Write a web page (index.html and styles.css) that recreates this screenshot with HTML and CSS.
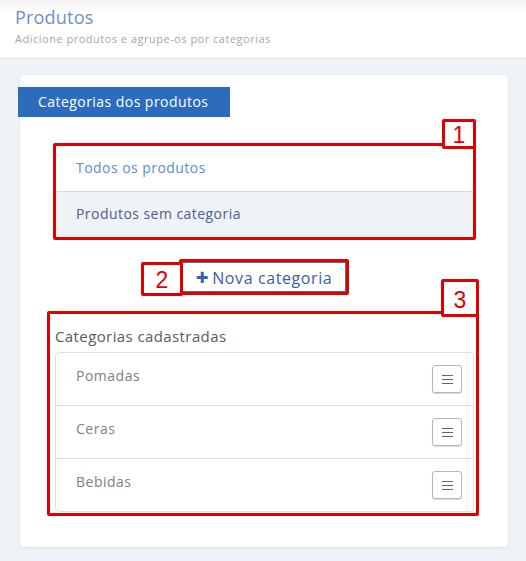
FILE: index.html
```html
<!DOCTYPE html>
<html lang="pt-BR">
<head>
  <meta charset="UTF-8" />
  <title>Produtos</title>
  <link rel="stylesheet" href="styles.css">
</head>
<body>
  <header class="page-header">
    <h1 class="page-title">Produtos</h1>
    <p class="page-subtitle">Adicione produtos e agrupe-os por categorias</p>
  </header>

  <main class="content">
    <section class="card">
      <div class="card-tab">Categorias dos produtos</div>

      <!-- 1: filtros fixos -->
      <div class="mark mark-filters">
        <span class="mark-num mark-num-top">1</span>
        <ul class="filter-list">
          <li class="filter-item">Todos os produtos</li>
          <li class="filter-item active">Produtos sem categoria</li>
        </ul>
      </div>

      <!-- 2: nova categoria -->
      <div class="new-row">
        <div class="mark mark-button">
          <span class="mark-num mark-num-left">2</span>
          <button class="btn-new"><span class="plus">+</span>Nova categoria</button>
        </div>
      </div>

      <!-- 3: categorias cadastradas -->
      <div class="mark mark-categories">
        <span class="mark-num mark-num-top tall">3</span>
        <h2 class="section-title">Categorias cadastradas</h2>
        <ul class="category-list">
          <li class="category-item">
            <span>Pomadas</span>
            <button class="btn-menu" aria-label="menu"><span></span><span></span><span></span></button>
          </li>
          <li class="category-item">
            <span>Ceras</span>
            <button class="btn-menu" aria-label="menu"><span></span><span></span><span></span></button>
          </li>
          <li class="category-item">
            <span>Bebidas</span>
            <button class="btn-menu" aria-label="menu"><span></span><span></span><span></span></button>
          </li>
        </ul>
      </div>
    </section>
  </main>
</body>
</html>
```

FILE: styles.css
```css
* { box-sizing: border-box; margin: 0; padding: 0; }
body {
  background: #edf3f7;
  font-family: "Open Sans", "Noto Sans", sans-serif;
  min-height: 561px;
}
ul { list-style: none; }

.page-header {
  height: 59px;
  padding: 5px 15px 0;
  background: linear-gradient(#f2f2f2, #fff 14px);
  border-bottom: 1px solid #dde3e8;
}
.page-title {
  font-size: 18px;
  font-weight: 400;
  line-height: 24px;
  color: #6d8fcd;
  letter-spacing: 0.2px;
}
.page-subtitle {
  font-size: 11px;
  line-height: 16px;
  margin-top: 2px;
  color: #a3a7ab;
  letter-spacing: 0.5px;
}

.content { padding: 16px 18px 0 20px; }
.card {
  background: #fff;
  border-radius: 4px;
  box-shadow: 0 1px 3px rgba(0,0,0,0.08);
  padding: 12px 0 31px;
  height: 472px;
}
.card-tab {
  width: 212px;
  height: 30px;
  margin-left: -2px;
  padding-left: 20px;
  background: #2d6bbd;
  color: #fff;
  font-size: 14px;
  letter-spacing: 0.45px;
  line-height: 30px;
}

/* red annotation frames */
.mark {
  position: relative;
  border: 3px solid #e10000;
  border-radius: 2px;
}
.mark-num {
  position: absolute;
  width: 34px;
  height: 30px;
  border: 3px solid #e10000;
  border-radius: 2px;
  color: #d00;
  font-family: "Liberation Sans", sans-serif;
  font-size: 23px;
  line-height: 26px;
  text-align: center;
  background: #fff;
}
.mark-num-top { bottom: 100%; right: -3px; margin-bottom: -3px; }
.mark-num-top.tall { height: 38px; width: 38px; line-height: 36px; }
.mark-num-left { right: 100%; top: 0; margin-right: -1px; height: 34px; width: 42px; line-height: 30px; }

.mark-filters {
  width: 423px;
  margin: 26px 0 0 33px;
}
.filter-item {
  height: 45px;
  padding-left: 20px;
  font-size: 14px;
  letter-spacing: 0.45px;
  line-height: 44px;
  color: #5b8bd5;
}
.filter-item.active {
  border-top: 1px solid #d6dbe3;
  height: 46px;
  background: #eff2f7;
  color: #4b5f8c;
}

.new-row {
  display: flex;
  justify-content: center;
  margin-top: 19px;
}
.mark-button { width: 170px; height: 36px; }
.btn-new {
  width: 100%;
  height: 100%;
  border: 1px solid #4a6ab0;
  background: #fff;
  color: #3c5ea6;
  font-family: inherit;
  font-size: 16px;
  letter-spacing: 0.6px;
  line-height: 28px;
}
.plus {
  font-weight: 800;
  font-size: 22px;
  margin-right: 3px;
  vertical-align: -2px;
}

.mark-categories {
  width: 432px;
  margin: 16px 0 0 27px;
  padding: 12px 2px 0 5px;
  height: 205px;
}
.section-title {
  font-size: 15px;
  font-weight: 400;
  line-height: 20px;
  letter-spacing: 0.4px;
  color: #555b60;
  margin-bottom: 6px;
}
.category-list {
  border: 1px solid #dedede;
  border-radius: 4px;
  width: 419px;
}
.category-item {
  display: flex;
  justify-content: space-between;
  align-items: flex-start;
  height: 53px;
  padding: 12px 11px 0 20px;
  border-top: 1px solid #dedede;
  font-size: 14px;
  letter-spacing: 0.5px;
  line-height: 22px;
  color: #7b8085;
}
.category-item:first-child { border-top: none; height: 52px; }
.btn-menu {
  width: 30px;
  height: 28px;
  border: 1px solid #b4b8bc;
  border-radius: 3px;
  background: #fff;
  box-shadow: 0 1px 1px rgba(0,0,0,0.15);
  display: flex;
  flex-direction: column;
  justify-content: center;
  align-items: center;
  gap: 3px;
}
.btn-menu span {
  display: block;
  width: 11px;
  height: 1px;
  background: #666;
}
```
